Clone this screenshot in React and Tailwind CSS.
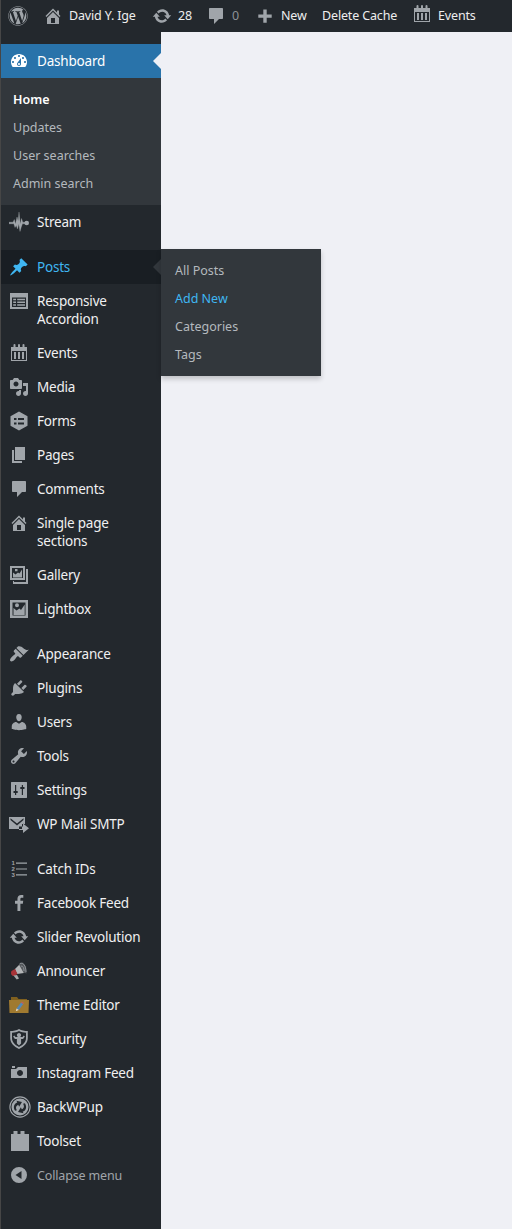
import React from "react";
import { FaWordpress } from "react-icons/fa";

const Svg = ({ children, className = "size-5", box = "0 0 20 20" }) => (
  <svg viewBox={box} className={`${className} shrink-0`} fill="currentColor" fillRule="evenodd">
    {children}
  </svg>
);

const paths = {
  dashboard:
    "M3.76 16h12.48c1.1-1.37 1.76-3.11 1.76-5 0-4.42-3.58-8-8-8s-8 3.58-8 8c0 1.89.66 3.63 1.76 5zM10 4c.55 0 1 .45 1 1s-.45 1-1 1-1-.45-1-1 .45-1 1-1zM6 6c.55 0 1 .45 1 1s-.45 1-1 1-1-.45-1-1 .45-1 1-1zm8 0c.55 0 1 .45 1 1s-.45 1-1 1-1-.45-1-1 .45-1 1-1zm-5.370 5.550L12 7v6c0 1.100-.9 2-2 2s-2-.9-2-2c0-.57.24-1.080.63-1.450zM4 10c.55 0 1 .45 1 1s-.45 1-1 1-1-.45-1-1 .45-1 1-1zm12 0c.55 0 1 .45 1 1s-.45 1-1 1-1-.45-1-1 .45-1 1-1zm-5 3c0-.55-.45-1-1-1s-1 .45-1 1 .45 1 1 1 1-.45 1-1z",
  pin: "M10.44 3.02l1.82-1.82 6.36 6.35-1.83 1.82c-1.05-.68-2.48-.57-3.41.36l-.75.75c-.92.93-1.04 2.35-.35 3.41l-1.83 1.82-2.41-2.41-2.8 2.79c-.42.42-3.38 2.71-3.8 2.29s1.86-3.39 2.28-3.81l2.79-2.79L4.1 9.36l1.83-1.82c1.05.69 2.48.57 3.4-.36l.75-.75c.93-.92 1.05-2.35.36-3.41z",
  pages: "M6 15V2h10v13H6zm-1 1h8v2H3V5h2v11z",
  comment: "M4 2h12c.6 0 1 .4 1 1v9c0 .6-.4 1-1 1h-3l-5 5v-5H4c-.6 0-1-.4-1-1V3c0-.6.4-1 1-1z",
  home: "M16 8.5l1.53 1.53-1.06 1.06L10 4.6l-6.47 6.49-1.06-1.06L10 2.5l4 4v-2h2v4zm-6-2.46l6 5.99V18H4v-5.97zM12 17v-5H8v5h4z",
  brush:
    "M14.48 11.06L7.41 3.99l1.5-1.5c.5-.56 2.3-.47 3.51.32 1.21.8 1.43 1.28 2.91 2.1 1.18.64 2.45 1.26 4.45.85zm-.71.71L6.7 4.7 4.93 6.47c-.39.39-.39 1.02 0 1.41l1.06 1.06c.39.39.39 1.03 0 1.42-.6.6-1.43 1.11-2.21 1.69-.35.26-.7.53-1.01.84C1.43 14.23.4 16.08 1.4 17.07c.99 1 2.84-.03 4.18-1.36.31-.31.58-.66.85-1.02.57-.78 1.08-1.61 1.69-2.21.39-.39 1.02-.39 1.41 0l1.06 1.06c.39.39 1.02.39 1.41 0z",
  plug: "M13.11 4.36L9.87 7.6 8 5.73l3.24-3.24c.35-.34 1.05-.2 1.56.32.52.51.66 1.21.31 1.55zm-8 1.77l.91-1.12 9.01 9.01-1.19.84c-.71.71-2.63 1.16-3.82 1.16H6.14L4.9 17.26c-.59.59-1.54.59-2.12 0-.59-.58-.59-1.53 0-2.12l1.24-1.24v-3.88c0-1.13.4-3.19 1.09-3.89zm7.26 3.97l3.24-3.24c.34-.35 1.04-.21 1.55.31.52.51.66 1.21.31 1.55l-3.24 3.25z",
  user: "M10 9.25c-2.27 0-2.73-3.44-2.73-3.44C7 4.02 7.82 2 9.97 2c2.16 0 2.98 2.02 2.71 3.81 0 0-.41 3.44-2.68 3.44zm0 2.57L12.72 10c2.39 0 4.52 2.33 4.52 4.53v2.49s-3.65 1.13-7.24 1.13c-3.65 0-7.24-1.13-7.24-1.13v-2.49c0-2.25 1.94-4.48 4.47-4.48z",
  wrench:
    "M16.68 9.77c-1.34 1.34-3.3 1.67-4.95.99l-5.41 6.52c-.99.99-2.59.99-3.58 0s-.99-2.59 0-3.57l6.52-5.42c-.68-1.65-.35-3.61.99-4.95 1.28-1.28 3.12-1.62 4.72-1.06l-2.89 2.89 2.82 2.82 2.86-2.87c.53 1.58.18 3.39-1.08 4.65zM3.81 16.21c.4.39 1.04.39 1.43 0 .4-.4.4-1.04 0-1.43-.39-.4-1.03-.4-1.43 0-.39.39-.39 1.03 0 1.43z",
  media:
    "M13 11V4c0-.55-.45-1-1-1h-1.67L9 1H5L3.67 3H2c-.55 0-1 .45-1 1v7c0 .55.45 1 1 1h10c.55 0 1-.45 1-1zM7 4.5c1.38 0 2.5 1.12 2.5 2.5S8.38 9.5 7 9.5 4.5 8.38 4.5 7 5.62 4.5 7 4.5zM14 6h5v10.5c0 1.38-1.12 2.5-2.5 2.5S14 17.88 14 16.5s1.12-2.5 2.5-2.5c.17 0 .34.02.5.05V9h-3V6zm-4 8.05V13h2v3.5c0 1.38-1.12 2.5-2.5 2.5S7 17.88 7 16.5 8.12 14 9.5 14c.17 0 .34.02.5.05z",
  update:
    "M10.2 3.28c3.53 0 6.43 2.61 6.92 6h2.08l-3.5 4-3.5-4h2.32c-.45-1.97-2.21-3.45-4.32-3.45-1.45 0-2.73.71-3.54 1.78L4.95 5.66C6.23 4.2 8.11 3.28 10.2 3.28zm-.4 13.44c-3.52 0-6.43-2.61-6.92-6H.8l3.5-4c1.17 1.33 2.33 2.67 3.5 4H5.48c.45 1.97 2.21 3.45 4.32 3.45 1.45 0 2.73-.71 3.54-1.78l1.71 1.95c-1.28 1.46-3.15 2.38-5.25 2.38z",
  facebook:
    "M8.46 18h2.93v-7.3h2.45l.37-2.84h-2.82V6.04c0-.82.23-1.38 1.41-1.38h1.51V2.11c-.26-.03-1.15-.11-2.19-.11-2.18 0-3.66 1.33-3.66 3.76v2.1H6v2.84h2.46V18z",
  camera: "M6 5V3H3v2h3zm12 10V4H9L7 6H2v9h16zm-7-8c1.66 0 3 1.34 3 3s-1.34 3-3 3-3-1.34-3-3 1.34-3 3-3z",
  sliders:
    "M2.500 2h15c.3 0 .5.200.5.500v15c0 .3-.2.500-.5.500h-15c-.3 0-.5-.2-.5-.5v-15c0-.3.200-.5.500-.5zM6 5v6H4.500v2H6v2h1.200v-2h1.500v-2H7.200V5zM12.800 5v2h-1.500v2h1.500v6H14V9h1.500V7H14V5z",
  calendar:
    "M2 4h2.500V2a1 1 0 0 1 2 0v2H9V2a1 1 0 0 1 2 0v2h2.500V2a1 1 0 0 1 2 0v2H18v14H2zM3 8v9h14V8zM5 9h2v7H5zm4 0h2v7H9zm4 0h2v7h-2z",
  accordion:
    "M1 2h18v16H1zM3 6.500v9.500h14V6.500zM4.200 7.700h2.800v1.500H4.200zm4 0H16v1.500H8.200zM4.200 10.500h2.800v1.500H4.200zm4 0H16v1.500H8.200zM4.200 13.300h2.800v1.500H4.200zm4 0H16v1.500H8.200z",
  forms: "M10 0.500l8.500 4.700v9.600L10 19.500 1.500 14.800V5.200zM5 7v2h2.500V7zm4 0v2h6V7zM5 11.500v2h2.500v-2zm4 0v2h6v-2z",
  gallery:
    "M1 1h15v14H1zM3 3v10h11V3zM4 12.500V7.500l2.500 2L9 7.500l1.500 1 2.500-4v8zM6 4h2.500v2.300H6zM17 4h2v15H4v-3h1v1h12z",
  lightbox: "M1 1h18v18H1zM3.500 3.500v13h13v-13zM4.500 16V9l3 2.500 3-2 1.500 1.500 3.700-5.500V16zM8 4.300a2 2 0 1 1 0 4 2 2 0 0 1 0-4z",
  mail: "M0 3h16v7h-3v5H0zM1.500 4.200L8 9.500l6.500-5.300v1.900L8 11.500 1.500 6.100zM14 9.500l6 4.700-6 4.800v-3h-4v-3.500h4z",
  list: "M7 3.500h11v1.200H7zm0 5.900h11v1.200H7zm0 5.900h11v1.200H7z",
  shield:
    "M10 0c2.500 1.500 5.500 2 8.800 2v7c0 5-3.800 8.500-8.800 11C5 17.500 1.200 14 1.200 9V2C4.500 2 7.500 1.500 10 0zm0 2.100C8 3.200 5.500 3.700 3 3.800V9c0 3.900 2.700 6.700 7 9 4.300-2.300 7-5.100 7-9V3.800C14.500 3.700 12 3.200 10 2.100z",
  bricks: "M2 3h2.500V0h4v3h3V0h4v3H20v17H2z",
  collapse: "M10 2a8 8 0 1 1 0 16 8 8 0 0 1 0-16zM12.500 6L6.500 10l6 4z",
  plus: "M8.300 3.500h3.400v5h5v3.300h-5v5H8.300v-5h-5V8.500h5z",
};

const Glyph = ({ name, className }) => {
  if (name === "stream")
    return (
      <Svg>
        <path
          d="M0 10.200h4l1.300-2.700L6.500 12 8 5l1.200 4L10 0l1.300 12 1.200-5.500 1.300 3.700H17v1.600h-3.500l-1.200 3.200L11 19.500l-1.200-7.500-1.300 5-1.200-3.500L6 15.500l-1.200-3.700H0z"
          stroke="currentColor"
          strokeWidth=".3"
        />
        <circle cx="17.700" cy="11" r="2.300" />
      </Svg>
    );
  if (name === "announcer")
    return (
      <Svg>
        <path d="M6 8l5-5 4 9-7 1z" fill="#b4b6b8" />
        <path d="M10 2.500l4-1 3 4 .5 7-3-1-4-7z" fill="#55595d" />
        <path d="M11 2.500c3-1.500 6 2.500 6 8.500M12 5c2 0 3 2 3 5" fill="none" stroke="#8d9196" strokeWidth="1" />
        <path d="M2.500 10l3.500-2 2.500 5-3.500 2c-2.200.3-3.800-2.500-2.500-5z" fill="#a93439" />
        <path d="M4.500 14.500l3.500-.5 2 3.500-2.300 1z" fill="#a8aaac" />
      </Svg>
    );
  if (name === "folder")
    return (
      <Svg>
        <path d="M2 2h6l1.500 2H18v3H2z" fill="#80601f" />
        <path d="M0 5h20l-.5 13H.5z" fill="#a07a30" />
        <path d="M7.500 13.500l4.500-6 2.300 1.600-4.500 6z" fill="#5488b8" />
        <path d="M12 7.500l.8-1.100 2.300 1.600-.8 1.100z" fill="#c0605c" />
        <path d="M7.500 13.500l2.300 1.600-3 1.200z" fill="#e6dccb" />
      </Svg>
    );
  if (name === "backup")
    return (
      <Svg className="size-[22px] translate-x-px">
        <circle cx="10" cy="10" r="9.200" fill="none" stroke="currentColor" strokeWidth="1" />
        <circle cx="10" cy="10" r="7.700" />
        <path
          d="M5.500 13.500C3.500 10 4.500 7 7.500 5.800L6.800 4.300l5 1.200-2.600 4.300-.8-1.900C6.500 8.800 5.700 10.500 7.200 13zM14.500 6.500c2 3.500 1 6.500-2 7.700l.7 1.500-5-1.200 2.600-4.300.8 1.900c1.900-.9 2.700-2.600 1.200-5.100z"
          fill="#23282d"
        />
      </Svg>
    );
  return (
    <Svg className={className}>
      <path d={paths[name]} />
      {name === "list" && (
        <g fontFamily="Liberation Sans, sans-serif" fontSize="6" fontWeight="bold">
          <text x="2.500" y="6">1</text>
          <text x="2.500" y="12">2</text>
          <text x="2.500" y="18">3</text>
        </g>
      )}
      {name === "shield" && (
        <path d="M10 4a2.200 2.200 0 0 1 1.200 4h2.300l1.200-1.500 1.200 1-1.800 2.500h-2v4.500L10 16.500 7.900 14.500V10h-2L4.100 7.500l1.200-1L6.500 8h2.300A2.200 2.200 0 0 1 10 4z" />
      )}
    </Svg>
  );
};

const Item = ({ icon, label, active, hover, muted }) => (
  <a
    className={`relative flex py-2 ${active ? "bg-[#2973aa] text-white" : hover ? "bg-[#191e23] text-[#3fb6f2]" : muted ? "text-[#a0a5aa]" : "text-[#f0f0f1]"}`}
  >
    <span
      className={`flex h-[18px] w-9 shrink-0 items-center justify-center ${active ? "text-white" : hover ? "text-[#3fb6f2]" : "text-[#a0a5aa]"}`}
    >
      <Glyph name={icon} />
    </span>
    <span
      className={`w-[112px] leading-[18px] ${muted ? "pt-px text-[12.5px] tracking-[-0.15px]" : "text-[13.5px] tracking-[-0.2px]"}`}
    >
      {label}
    </span>
    {(active || hover) && (
      <span
        className={`absolute top-1/2 right-0 -mt-2 border-y-8 border-r-8 border-y-transparent ${active ? "border-r-[#eff0f5]" : "border-r-[#32373c]"}`}
      />
    )}
  </a>
);

const SubItem = ({ children, className = "text-[#b4b9be]" }) => (
  <a className={`block h-7 text-[12.5px] leading-7 ${className}`}>{children}</a>
);

const content = [
  ["accordion", "Responsive Accordion"],
  ["calendar", "Events"],
  ["media", "Media"],
  ["forms", "Forms"],
  ["pages", "Pages"],
  ["comment", "Comments"],
  ["home", "Single page sections"],
  ["gallery", "Gallery"],
  ["lightbox", "Lightbox"],
];
const site = [
  ["brush", "Appearance"],
  ["plug", "Plugins"],
  ["user", "Users"],
  ["wrench", "Tools"],
  ["sliders", "Settings"],
  ["mail", "WP Mail SMTP"],
];
const plugins = [
  ["list", "Catch IDs"],
  ["facebook", "Facebook Feed"],
  ["update", "Slider Revolution"],
  ["announcer", "Announcer"],
  ["folder", "Theme Editor"],
  ["shield", "Security"],
  ["camera", "Instagram Feed"],
  ["backup", "BackWPup"],
  ["bricks", "Toolset"],
];

const BarItem = ({ icon, label, className, iconClass = "", dim }) => (
  <a className={`flex h-8 shrink-0 items-center whitespace-nowrap ${className}`}>
    {icon && (
      <span className={`mr-1.5 flex w-5 text-[#a0a5aa] ${iconClass}`}>
        <Glyph name={icon} />
      </span>
    )}
    <span className={`pt-px ${dim ? "text-[#8c9196]" : ""}`}>{label}</span>
  </a>
);

export default function App() {
  return (
    <div className="flex h-[1229px] w-[512px] flex-col overflow-hidden bg-[#eff0f5] font-['Noto_Sans','Open_Sans',sans-serif]">
      <header className="flex h-8 shrink-0 border-l border-[#464646] bg-[#23282d] text-[12.5px] tracking-[-0.15px] text-[#eee]">
        <a className="flex w-[42px] items-center pl-[7px] text-[#a0a5aa]">
          <FaWordpress className="size-5" />
        </a>
        <BarItem icon="home" label="David Y. Ige" className="w-[109px]" />
        <BarItem icon="update" label="28" className="w-[54px]" />
        <BarItem icon="comment" label="0" className="w-[49px]" dim />
        <BarItem icon="plus" label="New" className="w-[67px]" />
        <BarItem label="Delete Cache" className="w-[90px]" />
        <BarItem icon="calendar" label="Events" className="w-[90px]" iconClass="mb-1" />
      </header>
      <div className="flex flex-1">
        <nav className="w-[161px] border-l border-[#464646] bg-[#23282d] pt-3">
          <Item icon="dashboard" label="Dashboard" active />
          <div className="bg-[#32373c] pt-2 pb-[7px] pl-3">
            <SubItem className="font-semibold text-white">Home</SubItem>
            <SubItem>Updates</SubItem>
            <SubItem>User searches</SubItem>
            <SubItem>Admin search</SubItem>
          </div>
          <Item icon="stream" label="Stream" />
          <div className="relative mt-[11px]">
            <Item icon="pin" label="Posts" hover />
            <div className="absolute -top-px left-40 w-40 bg-[#32373c] pt-2 pb-[7px] pl-3.5 shadow-[0_3px_5px_rgba(0,0,0,0.2)]">
              <SubItem>All Posts</SubItem>
              <SubItem className="text-[#3fb6f2]">Add New</SubItem>
              <SubItem>Categories</SubItem>
              <SubItem>Tags</SubItem>
            </div>
          </div>
          {content.map(([icon, label]) => (
            <Item key={label} icon={icon} label={label} />
          ))}
          <div className="h-[11px]" />
          {site.map(([icon, label]) => (
            <Item key={label} icon={icon} label={label} />
          ))}
          <div className="h-[11px]" />
          {plugins.map(([icon, label]) => (
            <Item key={label} icon={icon} label={label} />
          ))}
          <Item icon="collapse" label="Collapse menu" muted />
        </nav>
      </div>
    </div>
  );
}
